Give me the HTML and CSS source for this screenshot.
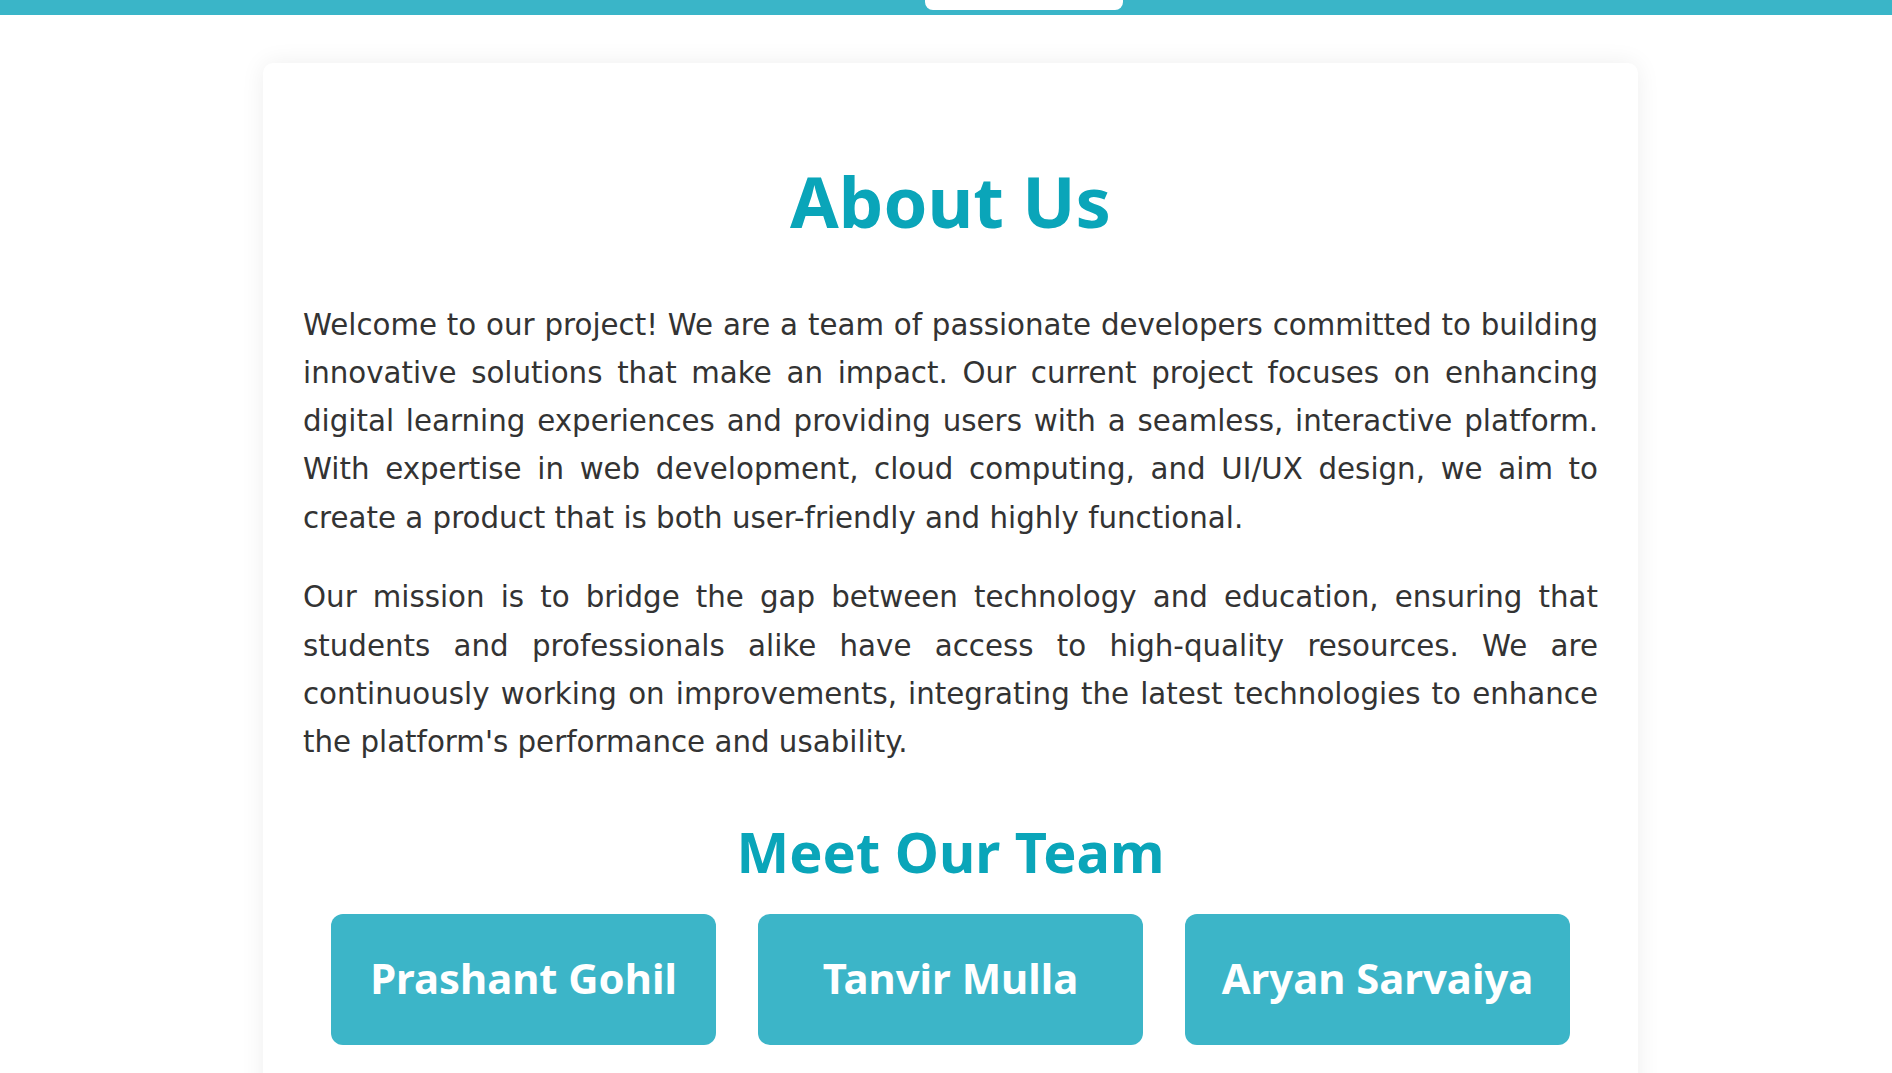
FILE: index.html
```html
<!DOCTYPE html>
<html lang="en">
<head>
<meta charset="utf-8">
<title>About Us</title>
<link rel="stylesheet" href="styles.css">
</head>
<body>
<header class="topbar">
  <div class="topbar-tab"></div>
</header>
<main class="page">
  <section class="card">
    <h1 class="title">About Us</h1>
    <p class="text">Welcome to our project! We are a team of passionate developers committed to building innovative solutions that make an impact. Our current project focuses on enhancing digital learning experiences and providing users with a seamless, interactive platform. With expertise in web development, cloud computing, and UI/UX design, we aim to create a product that is both user-friendly and highly functional.</p>
    <p class="text">Our mission is to bridge the gap between technology and education, ensuring that students and professionals alike have access to high-quality resources. We are continuously working on improvements, integrating the latest technologies to enhance the platform's performance and usability.</p>
    <h2 class="subtitle">Meet Our Team</h2>
    <div class="team">
      <div class="member">Prashant Gohil</div>
      <div class="member">Tanvir Mulla</div>
      <div class="member">Aryan Sarvaiya</div>
    </div>
  </section>
</main>
</body>
</html>
```
FILE: styles.css
```css
html, body {
  margin: 0;
  padding: 0;
  background: #ffffff;
}

body {
  font-family: "DejaVu Sans", Verdana, sans-serif;
  color: #333333;
}

.topbar {
  display: flex;
  height: 15px;
  background: #3ab5c8;
}

.topbar-tab {
  margin-left: 925px;
  width: 198px;
  height: 10px;
  background: #ffffff;
  border-radius: 0 0 8px 8px;
}

.page {
  padding: 48px 0 60px 0;
}

.card {
  width: 1375px;
  box-sizing: border-box;
  margin-left: 263px;
  padding: 96px 40px 60px 40px;
  background: #ffffff;
  border-radius: 10px;
  box-shadow: 0 0 24px rgba(0, 0, 0, 0.07);
}

.title {
  margin: 0 0 57px 0;
  font-family: "Noto Sans", "Open Sans", sans-serif;
  font-weight: 700;
  font-size: 70.5px;
  line-height: 1.2;
  color: #0aa5b9;
  text-align: center;
}

.text {
  margin: 0 0 31.2px 0;
  font-size: 29.3px;
  line-height: 48.3px;
  text-align: justify;
  color: #333333;
}

.text:last-of-type {
  margin-bottom: 0;
}

.subtitle {
  margin: 51.5px 0 29px 0;
  font-family: "Noto Sans", "Open Sans", sans-serif;
  font-weight: 700;
  font-size: 55.9px;
  line-height: 1.2;
  color: #0aa5b9;
  text-align: center;
}

.team {
  display: flex;
  justify-content: center;
  gap: 42px;
}

.member {
  width: 385px;
  padding: 39px 0 42px 0;
  font-family: "Noto Sans", "Open Sans", sans-serif;
  font-weight: 700;
  font-size: 41.8px;
  line-height: 50px;
  color: #ffffff;
  text-align: center;
  background: #3cb5c8;
  border-radius: 12px;
}
```
